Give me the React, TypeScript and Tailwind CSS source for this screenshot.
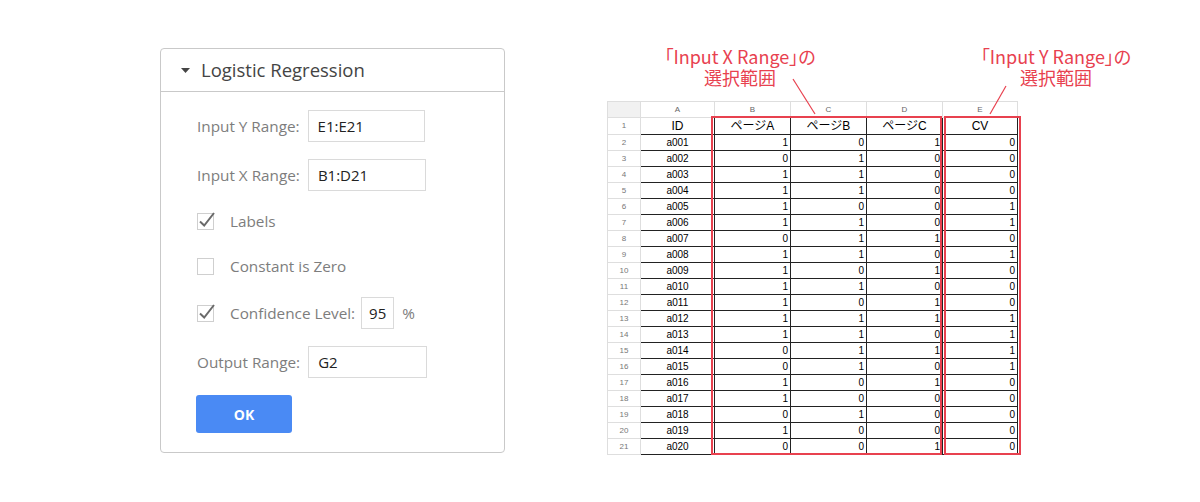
import React from "react";

const data: [string, number, number, number, number][] = [
  ["a001", 1, 0, 1, 0],
  ["a002", 0, 1, 0, 0],
  ["a003", 1, 1, 0, 0],
  ["a004", 1, 1, 0, 0],
  ["a005", 1, 0, 0, 1],
  ["a006", 1, 1, 0, 1],
  ["a007", 0, 1, 1, 0],
  ["a008", 1, 1, 0, 1],
  ["a009", 1, 0, 1, 0],
  ["a010", 1, 1, 0, 0],
  ["a011", 1, 0, 1, 0],
  ["a012", 1, 1, 1, 1],
  ["a013", 1, 1, 0, 1],
  ["a014", 0, 1, 1, 1],
  ["a015", 0, 1, 0, 1],
  ["a016", 1, 0, 1, 0],
  ["a017", 1, 0, 0, 0],
  ["a018", 0, 1, 0, 0],
  ["a019", 1, 0, 0, 0],
  ["a020", 0, 0, 1, 0],
];

function Checkbox({ checked }: { checked: boolean }) {
  return (
    <svg width="20" height="20" viewBox="0 0 20 20" className="shrink-0">
      <rect x="0.5" y="2.5" width="16" height="16" fill="#fff" stroke="#cfcfcf" />
      {checked && (
        <path d="M3 10.5 L7.2 14.5 L17 2" fill="none" stroke="#6a6a6a" strokeWidth="2" />
      )}
    </svg>
  );
}

function Field({ label, value, width }: { label: string; value: string; width: string }) {
  return (
    <div className="flex items-center h-[32px]">
      <span className="text-[15.3px] text-[#7d7d7d]">{label}</span>
      <div
        className={`ml-[8px] h-[32px] border border-[#dadada] pl-[9px] flex items-center text-[15px] text-[#222] ${width}`}
      >
        {value}
      </div>
    </div>
  );
}

function Panel() {
  return (
    <div className="w-[345px] h-[405px] border border-[#c9c9c9] rounded-[4px] font-['Open_Sans',sans-serif] shrink-0">
      <div className="h-[43px] border-b border-[#c9c9c9] flex items-center pl-[20px]">
        <svg width="9" height="5" viewBox="0 0 9 5" className="mr-[11px]">
          <path d="M0 0H9L4.5 5Z" fill="#444" />
        </svg>
        <span className="text-[18.5px] text-[#444]">Logistic Regression</span>
      </div>
      <div className="pl-[36px] pt-[18px] flex flex-col">
        <Field label="Input Y Range:" value="E1:E21" width="w-[117px]" />
        <div className="mt-[17px]">
          <Field label="Input X Range:" value="B1:D21" width="w-[118px]" />
        </div>
        <div className="mt-[20px] flex items-center h-[20px]">
          <Checkbox checked />
          <span className="ml-[13px] text-[15.3px] text-[#7d7d7d]">Labels</span>
        </div>
        <div className="mt-[25px] flex items-center h-[20px]">
          <Checkbox checked={false} />
          <span className="ml-[13px] text-[15.3px] text-[#7d7d7d]">Constant is Zero</span>
        </div>
        <div className="mt-[21px] flex items-center h-[32px]">
          <Checkbox checked />
          <span className="ml-[13px] text-[15.3px] text-[#7d7d7d]">Confidence Level:</span>
          <div className="ml-[6px] w-[33px] h-[32px] border border-[#dadada] flex items-center justify-center text-[15px] text-[#222]">
            95
          </div>
          <span className="ml-[8px] text-[15.3px] text-[#7d7d7d]">%</span>
        </div>
        <div className="mt-[17px]">
          <Field label="Output Range:" value="G2" width="w-[119px]" />
        </div>
        <div className="mt-[17px] -ml-[1px] w-[96px] h-[38px] rounded-[3px] bg-[#4a8af4] flex items-center justify-center text-white font-bold text-[14px]">
          OK
        </div>
      </div>
    </div>
  );
}

const light = "border border-[#dedede]";
const dark = "border border-[#222]";

function Sheet() {
  const cols = ["A", "B", "C", "D", "E"];
  return (
    <div className="relative ml-[102px] mt-[53px] font-['Liberation_Sans','Noto_Sans_CJK_JP',sans-serif] text-black">
      <table className="border-collapse table-fixed w-[410px]">
        <colgroup>
          <col className="w-[33px]" />
          <col className="w-[74px]" />
          <col className="w-[76px]" />
          <col className="w-[76px]" />
          <col className="w-[76px]" />
          <col className="w-[75px]" />
        </colgroup>
        <tbody>
          <tr className="h-[16px]">
            <td className={`${light} bg-[#f1f1f1] p-0`}></td>
            {cols.map((c) => (
              <td key={c} className={`${light} p-0 text-center text-[8px] leading-[14px] text-[#666]`}>
                {c}
              </td>
            ))}
          </tr>
          <tr className="h-[17px]">
            <td className={`${light} p-0 text-center text-[8px] text-[#777]`}>1</td>
            <td className={`${dark} p-0 text-center text-[12px] leading-[15px]`}>ID</td>
            <td className={`${dark} p-0 text-center text-[12px] leading-[15px]`}>ページA</td>
            <td className={`${dark} p-0 text-center text-[12px] leading-[15px]`}>ページB</td>
            <td className={`${dark} p-0 text-center text-[12px] leading-[15px]`}>ページC</td>
            <td className={`${dark} p-0 text-center text-[12px] leading-[15px]`}>CV</td>
          </tr>
          {data.map((r, i) => (
            <tr key={r[0]} className="h-[16px]">
              <td className={`${light} p-0 text-center text-[8px] text-[#777]`}>{i + 2}</td>
              <td className={`${dark} p-0 text-center text-[10px] leading-[14px]`}>{r[0]}</td>
              {r.slice(1).map((v, j) => (
                <td key={j} className={`${dark} p-0 pr-[2px] text-right text-[10px] leading-[14px]`}>
                  {v}
                </td>
              ))}
            </tr>
          ))}
        </tbody>
      </table>

      <div className="absolute left-[104px] top-[15px] w-[231px] h-[339px] border-2 border-[#e8414f]"></div>
      <div className="absolute left-[337px] top-[15px] w-[77px] h-[339px] border-2 border-[#e8414f]"></div>

      <svg className="absolute left-0 top-[-101px] overflow-visible" width="450" height="120">
        <line x1="186" y1="79" x2="208" y2="114" stroke="#e8414f" strokeWidth="1.2" />
        <line x1="399" y1="86" x2="383" y2="114" stroke="#e8414f" strokeWidth="1.2" />
      </svg>

      <div className="absolute left-[33px] top-[-55px] w-[200px] text-center text-[18px] leading-[21px] text-[#e8414f] font-['Noto_Sans_CJK_JP',sans-serif] [font-feature-settings:'palt']">
        <div>「Input X Range」の</div>
        <div>選択範囲</div>
      </div>
      <div className="absolute left-[349px] top-[-55px] w-[200px] text-center text-[18px] leading-[21px] text-[#e8414f] font-['Noto_Sans_CJK_JP',sans-serif] [font-feature-settings:'palt']">
        <div>「Input Y Range」の</div>
        <div>選択範囲</div>
      </div>
    </div>
  );
}

export default function App() {
  return (
    <div className="w-[1200px] h-[502px] bg-white flex items-start pl-[160px] pt-[48px] overflow-hidden">
      <Panel />
      <Sheet />
    </div>
  );
}
